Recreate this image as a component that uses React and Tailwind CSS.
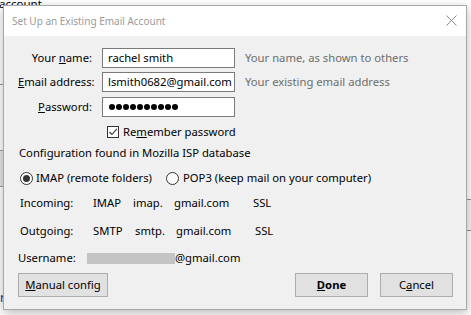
export default function App() {
  return (
    <div className="relative w-[471px] h-[315px] overflow-hidden bg-white font-['Noto_Sans',sans-serif] text-[11.25px] text-black">
      {/* background desktop bits */}
      <div className="absolute left-[-1px] top-[-2px] text-[11.5px] leading-none text-black">account</div>
      <div className="absolute left-0 top-[84px] w-[3px] h-[1px] bg-[#9a9a9a]" />
      <div className="absolute left-0 top-[150px] w-[3px] h-[37px] border-y border-[#a0a0a0] bg-[#e6e6e6]" />
      <div className="absolute left-0 top-[292px] text-[12px] leading-none text-[#1a1a9a]">r</div>
      <div className="absolute right-0 top-[199px] w-[4px] h-[32px] border-y border-[#909090] bg-[#f4f4f4]" />

      {/* dialog window */}
      <div className="absolute left-[3px] top-[5px] z-10 w-[464px] h-[305px] border border-[#a8a8a8] bg-[#f0f0f0] shadow-[0_3px_10px_rgba(0,0,0,0.28)] flex flex-col">
        {/* title bar */}
        <div className="h-[30px] bg-white flex items-center justify-between pl-[8px] pr-[9px]">
          <span className="text-[10px] text-[#9a9a9a] leading-none">Set Up an Existing Email Account</span>
          <svg width="11" height="11" viewBox="0 0 11 11" className="mb-[1px]">
            <path d="M0.5 0.5 L10.5 10.5 M10.5 0.5 L0.5 10.5" stroke="#8a8a8a" strokeWidth="1" />
          </svg>
        </div>

        {/* body */}
        <div className="flex flex-col pt-[12px] leading-[16px]">
          {/* name */}
          <div className="flex items-center h-[20px] pl-[14px]">
            <span className="w-[74px] text-right whitespace-nowrap">Your <u>n</u>ame:</span>
            <div className="ml-[10px] w-[133px] h-[20px] border border-[#7a7a7a] bg-white pl-[5px] flex items-center overflow-hidden whitespace-nowrap">rachel smith</div>
            <span className="ml-[10px] text-[#6d6d6d] whitespace-nowrap">Your name, as shown to others</span>
          </div>
          {/* email */}
          <div className="flex items-center h-[20px] pl-[14px] mt-[4px]">
            <span className="w-[74px] text-right whitespace-nowrap"><u>E</u>mail address:</span>
            <div className="ml-[10px] w-[133px] h-[20px] border border-[#7a7a7a] bg-white pl-[5px] flex items-center overflow-hidden whitespace-nowrap">lsmith0682@gmail.com</div>
            <span className="ml-[10px] text-[#6d6d6d] whitespace-nowrap">Your existing email address</span>
          </div>
          {/* password */}
          <div className="flex items-center h-[20px] pl-[14px] mt-[5px]">
            <span className="w-[74px] text-right"><u>P</u>assword:</span>
            <div className="ml-[10px] w-[133px] h-[20px] border border-[#7a7a7a] bg-white pl-[6px] flex items-center gap-[1px]">
              {Array.from({ length: 10 }).map((_, i) => (
                <span key={i} className="w-[6px] h-[6px] rounded-full bg-black" />
              ))}
            </div>
          </div>
          {/* remember */}
          <div className="flex items-center h-[16px] mt-[7px] pl-[103px]">
            <span className="w-[12px] h-[12px] border border-[#333333] bg-white flex items-center justify-center">
              <svg width="10" height="10" viewBox="0 0 10 10">
                <path d="M1.5 5 L4 7.5 L8.8 1.8" fill="none" stroke="#333333" strokeWidth="1.1" />
              </svg>
            </span>
            <span className="ml-[4px] whitespace-nowrap">Re<u>m</u>ember password</span>
          </div>
          {/* config found */}
          <div className="h-[16px] mt-[5px] pl-[15px] whitespace-nowrap">Configuration found in Mozilla ISP database</div>
          {/* radios */}
          <div className="flex items-center h-[16px] mt-[9px] pl-[16px]">
            <span className="w-[13px] h-[13px] rounded-full border border-[#333333] bg-white flex items-center justify-center">
              <span className="w-[7px] h-[7px] rounded-full bg-[#333333]" />
            </span>
            <span className="ml-[3px] w-[130px] whitespace-nowrap">IMAP (remote folders)</span>
            <span className="w-[13px] h-[13px] rounded-full border border-[#333333] bg-white" />
            <span className="ml-[4px] whitespace-nowrap">POP3 (keep mail on your computer)</span>
          </div>
          {/* incoming */}
          <div className="flex items-center h-[16px] mt-[9px] pl-[16px] whitespace-nowrap">
            <span className="w-[73px]">Incoming:</span>
            <span className="w-[40px]">IMAP</span>
            <span className="w-[41px]">imap.</span>
            <span className="w-[79px]">gmail.com</span>
            <span>SSL</span>
          </div>
          {/* outgoing */}
          <div className="flex items-center h-[16px] mt-[12px] pl-[16px] whitespace-nowrap">
            <span className="w-[73px]">Outgoing:</span>
            <span className="w-[42px]">SMTP</span>
            <span className="w-[41px]">smtp.</span>
            <span className="w-[79px]">gmail.com</span>
            <span>SSL</span>
          </div>
          {/* username */}
          <div className="flex items-center h-[16px] mt-[11px] pl-[14px] whitespace-nowrap">
            <span className="w-[69px]">Username:</span>
            <span className="w-[88px] h-[11px] bg-[#c4c4c4]" />
            <span>@gmail.com</span>
          </div>
          {/* buttons */}
          <div className="flex items-center mt-[7px] pl-[14px] pr-[13px]">
            <button className="w-[90px] h-[24px] border border-[#adadad] bg-[#e1e1e1] flex items-center justify-center"><span><u>M</u>anual config</span></button>
            <div className="flex-1" />
            <button className="w-[73px] h-[24px] border border-[#adadad] bg-[#e1e1e1] flex items-center justify-center font-bold"><span><u>D</u>one</span></button>
            <button className="ml-[12px] w-[73px] h-[24px] border border-[#adadad] bg-[#e1e1e1] flex items-center justify-center"><span>C<u>a</u>ncel</span></button>
          </div>
        </div>
      </div>
    </div>
  );
}
